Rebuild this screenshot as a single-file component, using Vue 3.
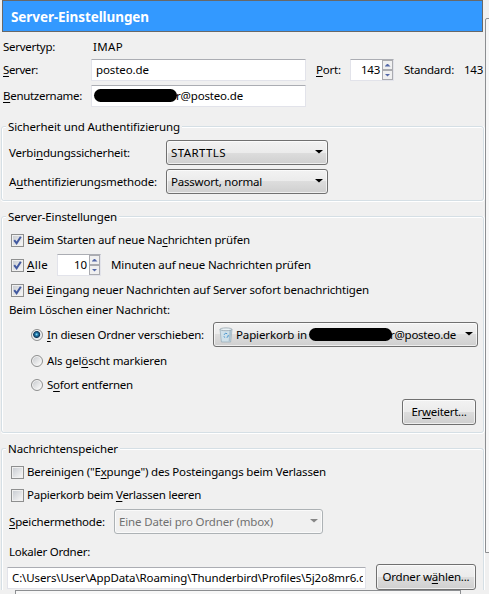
<script setup>
import { ref } from 'vue'

const server = ref('posteo.de')
const port = ref('143')
const minutes = ref('10')
const folder = ref('C:\\Users\\User\\AppData\\Roaming\\Thunderbird\\Profiles\\5j2o8mr6.d')

// Tracks a label so that it fills the given width in pixels.
const vFit = {
  mounted(el, { value }) {
    const natural = el.getBoundingClientRect().width
    const count = el.textContent.length
    el.style.letterSpacing = (value - natural) / count + 'px'
  }
}
</script>

<template>
  <div class="window">
    <main class="pane">
      <header class="title"><span v-fit="138">Server-Einstellungen</span></header>

      <section class="account">
        <div class="row r-type">
          <div class="key"><span v-fit="52">Servertyp:</span></div>
          <span class="imap" v-fit="30">IMAP</span>
        </div>
        <div class="row r-server">
          <div class="key"><span v-fit="35"><u>S</u>erver:</span></div>
          <div class="field wide"><span v-fit="53">{{ server }}</span></div>
          <div class="port"><span v-fit="25"><u>P</u>ort:</span></div>
          <div class="spin"><span class="num" v-fit="19">{{ port }}</span><span class="arrows"><i class="up"></i><i class="down"></i></span></div>
          <div class="std"><span v-fit="50">Standard:</span></div>
          <span v-fit="19">143</span>
        </div>
        <div class="row r-user">
          <div class="key"><span v-fit="79"><u>B</u>enutzername:</span></div>
          <div class="field wide user"><i class="blob"></i><span v-fit="67">r@posteo.de</span></div>
        </div>
      </section>

      <section class="group g1">
        <div class="legend"><span v-fit="172">Sicherheit und Authentifizierung</span></div>
        <div class="row h25 s1">
          <div class="key2"><span v-fit="121">Verbi<u>n</u>dungssicherheit:</span></div>
          <div class="select w162"><span v-fit="55">STARTTLS</span><i class="caret"></i></div>
        </div>
        <div class="row h25 s2">
          <div class="key2"><span v-fit="148">A<u>u</u>thentifizierungsmethode:</span></div>
          <div class="select w162"><span v-fit="91">Passwort, normal</span><i class="caret"></i></div>
        </div>
      </section>

      <section class="group g2">
        <div class="legend"><span v-fit="109">Server-Einstellungen</span></div>
        <div class="row check c1">
          <span class="box"><svg viewBox="0 0 13 13"><path d="M3.2 6.2 5.6 9.2 9.8 2.8" /></svg></span>
          <span v-fit="223">Beim Starten auf neue Na<u>c</u>hrichten prüfen</span>
        </div>
        <div class="row check c2">
          <span class="box"><svg viewBox="0 0 13 13"><path d="M3.2 6.2 5.6 9.2 9.8 2.8" /></svg></span>
          <div class="alle"><span v-fit="21"><u>A</u>lle</span></div>
          <div class="spin"><span class="num" v-fit="13">{{ minutes }}</span><span class="arrows"><i class="up"></i><i class="down"></i></span></div>
          <span class="minuten" v-fit="200">Minuten auf neue Nachrichten prüfen</span>
        </div>
        <div class="row check c3">
          <span class="box"><svg viewBox="0 0 13 13"><path d="M3.2 6.2 5.6 9.2 9.8 2.8" /></svg></span>
          <span v-fit="342">Bei <u>E</u>ingang neuer Nachrichten auf Server sofort benachrichtigen</span>
        </div>
        <div class="row del"><span v-fit="161">Beim Löschen einer Nachricht:</span></div>
        <div class="row radio o1">
          <i class="dot on"></i>
          <div class="move"><span v-fit="157"><u>I</u>n diesen Ordner verschieben:</span></div>
          <div class="select folder">
            <svg class="bin" viewBox="0 0 14 16">
              <path class="bin-body" d="M1 2.5 2.4 15h9.2L13 2.5z" />
              <path class="bin-shade" d="M10.5 3h2l-1.3 11.5H9.6z" />
              <ellipse class="bin-rim" cx="7" cy="2.3" rx="6" ry="1.4" />
              <path class="cycle" d="M5 7.9 6.4 6.2 8.2 6.7M9.3 7.9 9 9.8 7.6 10.3M6.1 10.4 4.7 9.6" />
            </svg>
            <span v-fit="71">Papierkorb in</span><i class="blob"></i><span v-fit="66">r@posteo.de</span><i class="caret"></i>
          </div>
        </div>
        <div class="row radio o2"><i class="dot"></i><span v-fit="120">Als gel<u>ö</u>scht markieren</span></div>
        <div class="row radio o3"><i class="dot"></i><span v-fit="86">S<u>o</u>fort entfernen</span></div>
        <div class="row adv"><div class="button w74"><span v-fit="55">Er<u>w</u>eitert...</span></div></div>
      </section>

      <section class="group g3">
        <div class="legend"><span v-fit="110">Nachrichtenspeicher</span></div>
        <div class="row check c4"><span class="box"></span><span v-fit="299">Bereinigen ("E<u>x</u>punge") des Posteingangs beim Verlassen</span></div>
        <div class="row check c5"><span class="box"></span><span v-fit="174">Papierkorb beim <u>V</u>erlassen leeren</span></div>
        <div class="row store">
          <div class="key3"><span v-fit="96"><u>S</u>peichermethode:</span></div>
          <div class="select off"><span v-fit="154">Eine Datei pro Ordner (mbox)</span><i class="caret"></i></div>
        </div>
        <div class="row local"><span v-fit="81">Lokaler Ordner:</span></div>
        <div class="row path">
          <div class="field long"><div class="clip"><span v-fit="354">{{ folder }}</span></div></div>
          <div class="button w100"><span v-fit="87">Ordner w<u>ä</u>hlen...</span></div>
        </div>
      </section>
      <footer class="below"><i class="edge"></i></footer>
    </main>
    <aside class="frame"></aside>
  </div>
</template>

<style>
body {
  margin: 0;
  overflow: hidden;
}
</style>

<style scoped>
.window {
  display: flex;
  width: 489px;
  height: 594px;
  overflow: hidden;
  background: #f0f0f0;
  color: #000;
  font: 11.5px/16px "Noto Sans", "Open Sans", sans-serif;
  white-space: nowrap;
}
.window * { box-sizing: border-box; }
.window span { flex: none; }
u { text-decoration: underline; text-underline-offset: 2px; text-decoration-thickness: 1px; }
.pane { width: 485px; flex: none; }
.frame {
  width: 8px;
  height: 535px;
  margin-top: 18px;
  flex: none;
  border: 1px solid #8c8e91;
  border-top-left-radius: 2px;
  background: #f7f7f7;
}
.title {
  display: flex;
  align-items: center;
  width: 481px;
  height: 32px;
  margin-left: 2px;
  padding: 2px 0 0 8px;
  border: 1px solid #686868;
  background: #39f;
  color: #fff;
  font-size: 13.5px;
  font-weight: 700;
}
.row { display: flex; align-items: center; }
.account { padding-left: 3px; }
.r-type { height: 16px; margin-top: 7px; }
.r-server { height: 22px; margin-top: 4px; }
.r-user { height: 22px; margin-top: 4px; }
.key { width: 88px; flex: none; }
.imap { margin-left: 2px; }
.field {
  display: flex;
  align-items: center;
  height: 22px;
  background: #fff;
  border: 1px solid #e2e3ea;
  border-top-color: #abadb3;
  border-radius: 1px;
  flex: none;
}
.wide { width: 215px; padding-left: 4px; }
.user { padding-left: 2px; }
.blob {
  display: block;
  width: 83px;
  height: 13px;
  border-radius: 7px;
  background: #000;
  flex: none;
}
.user .blob { margin: -2px -1px 0 0; }
.port { width: 34px; margin-left: 10px; flex: none; }
.spin {
  display: flex;
  align-items: center;
  justify-content: flex-end;
  width: 44px;
  height: 22px;
  border: 1px solid #e2e3ea;
  border-top-color: #abadb3;
  background: #fff;
  flex: none;
}
.num { margin-right: 2px; }
.arrows {
  display: flex;
  flex-direction: column;
  justify-content: space-between;
  width: 11px;
  height: 20px;
}
.arrows i {
  display: flex;
  align-items: center;
  justify-content: center;
  height: 10px;
  border: 1px solid #aaabb0;
  background: #f0f0f0;
}
.arrows i::after {
  content: "";
  width: 6px;
  height: 3px;
  background: #5468a8;
  clip-path: polygon(0 0, 100% 0, 50% 100%);
}
.arrows .up::after { clip-path: polygon(50% 0, 100% 100%, 0 100%); }
.std { width: 60px; margin-left: 10px; flex: none; }

.group {
  width: 483px;
  margin-left: 1px;
  border: 1px solid #d5dfe5;
  border-radius: 3px;
  box-shadow: inset 0 1px #fff, inset 1px 0 #fff, 0 1px #fff, 1px 0 #fff;
}
.g1 { height: 75px; margin-top: 19px; }
.g2 { height: 217px; margin-top: 15px; }
.g3 { height: 142px; margin-top: 15px; border-bottom: 0; border-bottom-left-radius: 0; border-bottom-right-radius: 0; }
.legend {
  width: fit-content;
  height: 16px;
  margin: -8px 0 0 4px;
  padding: 0 2px;
  background: #f0f0f0;
}
.h25 { height: 25px; }
.s1 { margin-top: 5px; }
.s2 { margin-top: 4px; }
.key2 { width: 157px; margin-left: 7px; flex: none; }
.select,
.button {
  display: flex;
  align-items: center;
  border: 1px solid #707070;
  border-radius: 3px;
  background: linear-gradient(#f2f2f2 0, #ebebeb 50%, #ddd 50%, #cfcfcf 100%);
  box-shadow: inset 0 0 0 1px rgba(255, 255, 255, .65);
  flex: none;
}
.select { height: 25px; padding: 0 4px; }
.w162 { width: 162px; }
.caret {
  width: 8px;
  height: 4px;
  margin: -2px 0 0 auto;
  background: #000;
  clip-path: polygon(0 0, 100% 0, 100% 12%, 50% 100%, 0 12%);
}
.check { padding-left: 9px; }
.box {
  display: block;
  width: 13px;
  height: 13px;
  margin-right: 3px;
  border: 1px solid #8e8f8f;
  background: linear-gradient(135deg, #c5c9cf, #f3f3f3 85%);
  background-clip: content-box;
  background-color: #f4f4f4;
  padding: 1px;
  position: relative;
}
.box svg { position: absolute; left: -1px; top: -1px; width: 13px; height: 13px; }
.box path { fill: none; stroke: #4259a0; stroke-width: 2; }
.c1 { height: 16px; margin-top: 7px; }
.c2 { height: 22px; margin-top: 6px; }
.c3 { height: 16px; margin-top: 6px; }
.alle { width: 30px; flex: none; }
.minuten { margin: -1px 0 0 10px; }
.del { height: 16px; margin: 4px 0 0 7px; }
.radio { padding-left: 29px; }
.dot {
  width: 12px;
  height: 12px;
  margin-right: 4px;
  border: 1px solid #8e8f8f;
  border-radius: 50%;
  background: linear-gradient(135deg, #c3c6ca, #f5f5f5 80%);
  box-shadow: inset 0 0 0 1px #f4f4f4;
  flex: none;
}
.dot.on { background: radial-gradient(circle at 46% 44%, #9be2f7 0, #237fb0 18%, #103658 40%, #dfe4e8 52%); }
.o1 { height: 25px; margin-top: 4px; }
.o2 { height: 16px; margin-top: 6px; }
.o3 { height: 16px; margin-top: 8px; }
.move { width: 166px; flex: none; }
.folder { width: 265px; }
.bin { width: 14px; height: 16px; margin: 0 3px 0 1px; flex: none; }
.bin-body { fill: #cfe0e9; stroke: #8ca3b0; stroke-width: .6; }
.bin-shade { fill: #a9c0cd; }
.bin-rim { fill: #e9f1f5; stroke: #8b9ca6; stroke-width: .7; }
.cycle { fill: none; stroke: #4b98cf; stroke-width: 1; }
.folder .blob { margin: 0 -2px 0 2px; }
.adv { justify-content: flex-end; margin-top: 6px; padding-right: 7px; }
.button { height: 26px; justify-content: center; }
.w74 { width: 74px; }
.c4 { height: 16px; margin-top: 7px; }
.c5 { height: 16px; margin-top: 7px; }
.store { height: 25px; margin-top: 6px; }
.key3 { width: 105px; margin-left: 7px; flex: none; }
.off { width: 209px; border-color: #adb2b5; background: #f0f0f0; color: #707070; }
.off .caret { background: #868686; }
.local { height: 16px; margin: 10px 0 0 7px; }
.path { height: 27px; margin: 3px 0 0 5px; }
.long { width: 359px; margin: 3px 10px 0 0; padding-left: 4px; }
.clip { width: 351px; overflow: hidden; }
.w100 { width: 100px; }
.below { display: flex; height: 4px; background: #f0f0f0; }
.edge { width: 446px; height: 4px; margin-left: 15px; border: 1px solid #8c8e91; border-bottom: 0; background: #f7f7f7; }
</style>
